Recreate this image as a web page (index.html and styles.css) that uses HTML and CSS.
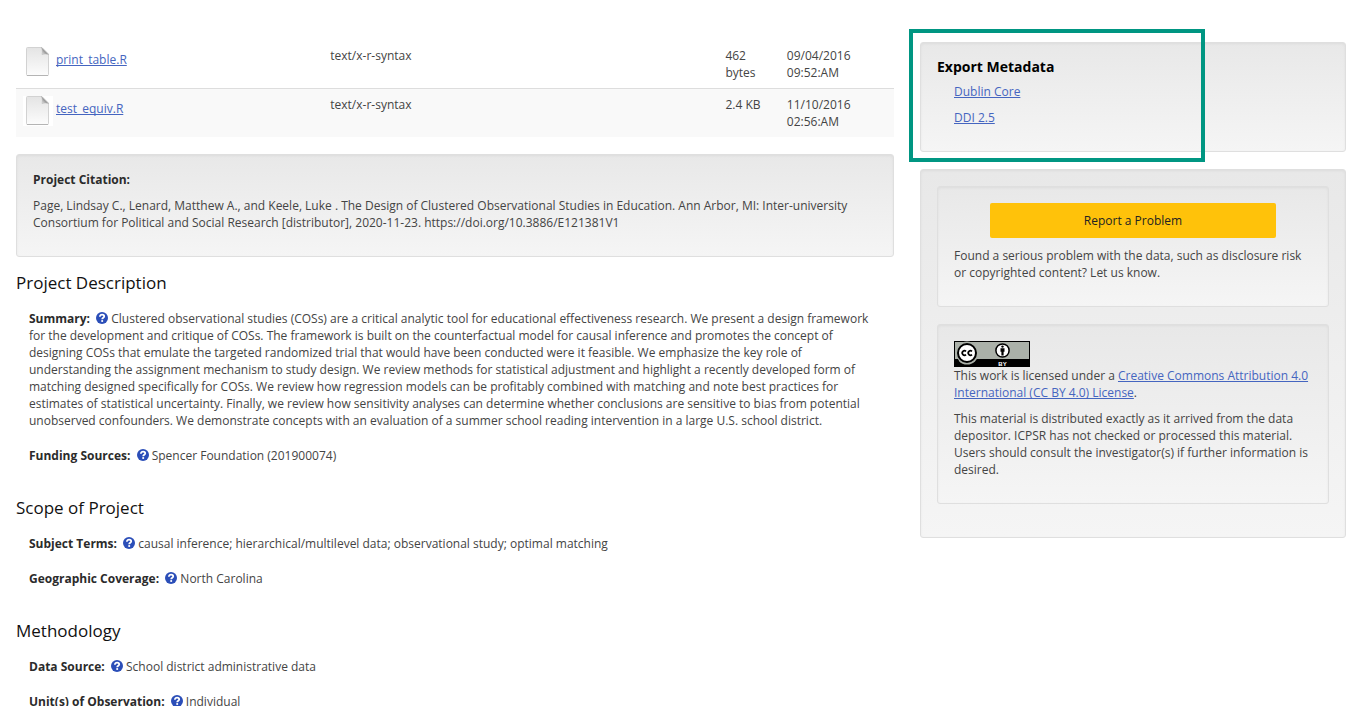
FILE: index.html
```html
<!DOCTYPE html>
<html lang="en">
<head>
<meta charset="utf-8">
<title>The Design of Clustered Observational Studies in Education</title>
<link rel="stylesheet" href="styles.css">
</head>
<body>
<svg class="defs" aria-hidden="true">
  <defs>
    <symbol id="help" viewBox="0 0 12 12">
      <circle cx="6" cy="6" r="6" fill="#2b4eb8"/>
      <path d="M3.900 4.700C3.900 3.200 4.900 2.600 6.100 2.600C7.300 2.600 8.200 3.300 8.200 4.400C8.200 5.800 6.200 5.700 6.200 7.200" fill="none" stroke="#fff" stroke-width="1.800"/>
      <rect x="5.300" y="8.100" width="1.800" height="1.800" fill="#fff"/>
    </symbol>
    <linearGradient id="paper" x1="0" y1="0" x2="0" y2="1">
      <stop offset="0" stop-color="#e4e4e4"/>
      <stop offset="1" stop-color="#fcfcfc"/>
    </linearGradient>
    <linearGradient id="fold" x1="0" y1="1" x2="1" y2="0">
      <stop offset="0" stop-color="#f4f4f4"/>
      <stop offset="0.500" stop-color="#8c8c8c"/>
      <stop offset="1" stop-color="#d8d8d8"/>
    </linearGradient>
    <symbol id="file" viewBox="0 0 30 30">
      <rect width="30" height="30" fill="#fff"/>
      <path d="M4.500 .5H19L25.500 7V27.500Q25.500 28.500 24.500 28.500H4.500Q3.500 28.500 3.500 27.500V1.500Q3.500 .5 4.500 .5Z" fill="url(#paper)" stroke="#d2d2d2"/>
      <path d="M4 28.500H25" stroke="#b4b4b4"/>
      <path d="M18.500 .5C19.500 3 19.500 5 19 7.500C22 6.800 24 6.900 25.500 7.500Z" fill="url(#fold)" stroke="#b0b0b0" stroke-width=".5"/>
    </symbol>
  </defs>
</svg>

<div class="page">
  <main class="main">
    <table class="files">
      <colgroup><col class="col-name"><col class="col-type"><col class="col-size"><col class="col-date"></colgroup>
      <tbody>
        <tr>
          <td><div class="file"><svg class="file-icon" aria-hidden="true"><use href="#file"/></svg><a href="#print_table">print_table.R</a></div></td>
          <td>text/x-r-syntax</td>
          <td>462 bytes</td>
          <td>09/04/2016 09:52:AM</td>
        </tr>
        <tr>
          <td><div class="file"><svg class="file-icon" aria-hidden="true"><use href="#file"/></svg><a href="#test_equiv">test_equiv.R</a></div></td>
          <td>text/x-r-syntax</td>
          <td>2.4 KB</td>
          <td>11/10/2016 02:56:AM</td>
        </tr>
      </tbody>
    </table>

    <section class="well citation">
      <p><strong>Project Citation:</strong></p>
      <p>Page, Lindsay C., Lenard, Matthew A., and Keele, Luke . The Design of Clustered Observational Studies in Education. Ann Arbor, MI: Inter-university Consortium for Political and Social Research [distributor], 2020-11-23. https://doi.org/10.3886/E121381V1</p>
    </section>

    <section class="section">
      <h2>Project Description</h2>
      <div class="entry"><strong>Summary:</strong> <svg class="help" role="img" aria-label="Help"><use href="#help"/></svg> Clustered observational studies (COSs) are a critical analytic tool for educational effectiveness research. We present a design framework for the development and critique of COSs. The framework is built on the counterfactual model for causal inference and promotes the concept of designing COSs that emulate the targeted randomized trial that would have been conducted were it feasible. We emphasize the key role of understanding the assignment mechanism to study design. We review methods for statistical adjustment and highlight a recently developed form of matching designed specifically for COSs. We review how regression models can be profitably combined with matching and note best practices for estimates of statistical uncertainty. Finally, we review how sensitivity analyses can determine whether conclusions are sensitive to bias from potential unobserved confounders. We demonstrate concepts with an evaluation of a summer school reading intervention in a large U.S. school district.</div>
      <div class="entry"><strong>Funding Sources:</strong> <svg class="help" role="img" aria-label="Help"><use href="#help"/></svg> Spencer Foundation (201900074)</div>
    </section>

    <section class="section">
      <h2>Scope of Project</h2>
      <div class="entry"><strong>Subject Terms:</strong> <svg class="help" role="img" aria-label="Help"><use href="#help"/></svg> causal inference; hierarchical/multilevel data; observational study; optimal matching</div>
      <div class="entry"><strong>Geographic Coverage:</strong> <svg class="help" role="img" aria-label="Help"><use href="#help"/></svg> North Carolina</div>
    </section>

    <section class="section">
      <h2>Methodology</h2>
      <div class="entry"><strong>Data Source:</strong> <svg class="help" role="img" aria-label="Help"><use href="#help"/></svg> School district administrative data</div>
      <div class="entry"><strong>Unit(s) of Observation:</strong> <svg class="help" role="img" aria-label="Help"><use href="#help"/></svg> Individual</div>
    </section>
  </main>

  <aside class="side">
    <section class="well export">
      <h3>Export Metadata</h3>
      <ul class="export-list">
        <li><a href="#dublin-core">Dublin Core</a></li>
        <li><a href="#ddi">DDI 2.5</a></li>
      </ul>
      <div class="highlight"></div>
    </section>

    <div class="well">
      <section class="well">
        <button class="report" type="button">Report a Problem</button>
        <p>Found a serious problem with the data, such as disclosure risk or copyrighted content? Let us know.</p>
      </section>
      <section class="well">
        <svg class="cc-badge" viewBox="0 0 76 26" role="img" aria-label="Creative Commons Attribution">
          <rect width="76" height="26" fill="#000"/>
          <rect x="1" y="1" width="74" height="17" fill="#abb1a9"/>
          <circle cx="13" cy="12" r="11.500" fill="#abb1a9"/>
          <path d="M1 18H4L6 22H1Z" fill="#000"/>
          <circle cx="13" cy="12" r="9" fill="#fff" stroke="#000" stroke-width="2"/>
          <path d="M12 10.400A2.200 2.200 0 1 0 12 13.600M18 10.400A2.200 2.200 0 1 0 18 13.600" fill="none" stroke="#000" stroke-width="1.700"/>
          <circle cx="48.500" cy="9.500" r="6.600" fill="#fff" stroke="#000" stroke-width="1.500"/>
          <circle cx="48.500" cy="5.600" r="1.200"/>
          <path d="M46.500 7.200H50.500V10.700H49.600V14.400H47.400V10.700H46.500Z"/>
          <text x="48.500" y="24.500" class="cc-label">BY</text>
        </svg>
        <p>This work is licensed under a <a href="#license">Creative Commons Attribution 4.0 International (CC BY 4.0) License</a>.</p>
        <p>This material is distributed exactly as it arrived from the data depositor. ICPSR has not checked or processed this material. Users should consult the investigator(s) if further information is desired.</p>
      </section>
    </div>
  </aside>
</div>
</body>
</html>
```
FILE: styles.css
```css
* { box-sizing: border-box; }

body {
  margin: 0;
  background: #fff;
  color: #444;
  font-family: "Open Sans", "Noto Sans", sans-serif;
  font-size: 12px;
  line-height: 17px;
}

a {
  color: #4565c0;
  text-decoration: underline;
  text-decoration-skip-ink: none;
}
strong { color: #2b2b2b; font-weight: 700; }
p { margin: 0 0 9px; }

.defs { position: absolute; width: 0; height: 0; }

.page {
  display: grid;
  grid-template-columns: 878fr 426fr;
  gap: 26px;
  align-items: start;
  padding: 40px 23px 0 16px;
}

.files {
  width: 100%;
  margin-bottom: 17px;
  border-collapse: collapse;
  table-layout: fixed;
}
.files td { padding: 7px; vertical-align: top; }
.files tr + tr td { border-top: 1px solid #ddd; }
.files tr:nth-child(even) { background: #f9f9f9; }
.col-name { width: 35%; }
.col-type { width: 45%; }
.col-size { width: 7%; }
.col-date { width: 13%; }
.file { display: flex; gap: 3px; line-height: 26px; }
.file-icon { width: 30px; height: 30px; }

.well {
  padding: 16px;
  margin-bottom: 17px;
  border: 1px solid #dfdfdf;
  border-radius: 3px;
  background: linear-gradient(#e8e8e8, #f5f5f5);
  box-shadow: inset 0 1px 3px rgba(0, 0, 0, 0.05);
}
.citation { margin-bottom: 16px; }

h2 {
  margin: 0 0 17px;
  color: #111;
  font-size: 17px;
  font-weight: 400;
  line-height: 20px;
}

.section { margin-bottom: 34px; }
.section:last-child { margin-bottom: 0; }
.entry { margin: 0 13px 18px; }
.section:last-child .entry:last-child { margin-bottom: 0; }

.help {
  width: 12px;
  height: 12px;
  margin-left: 3px;
  vertical-align: -1px;
}

.side { padding-top: 2px; }
.export { position: relative; }

h3 {
  margin: 0 0 8px;
  color: #000;
  font-size: 14px;
  font-weight: 700;
  line-height: 16px;
}

.export-list { margin: 0; padding: 0 0 0 17px; list-style: none; }
.export-list li { margin-bottom: 9px; }

.highlight {
  position: absolute;
  top: -14px;
  bottom: -11px;
  left: -12px;
  width: 296px;
  border: 4px solid #009682;
  pointer-events: none;
}

.report {
  display: block;
  width: 80%;
  margin: 0 auto 9px;
  padding: 9px;
  border: 0;
  border-radius: 2px;
  background: #ffc20a;
  color: #222;
  font: inherit;
}

.cc-badge { display: block; width: 76px; height: 26px; }
.cc-label {
  fill: #fff;
  font: 700 6px "Liberation Sans", sans-serif;
  text-anchor: middle;
}
```
